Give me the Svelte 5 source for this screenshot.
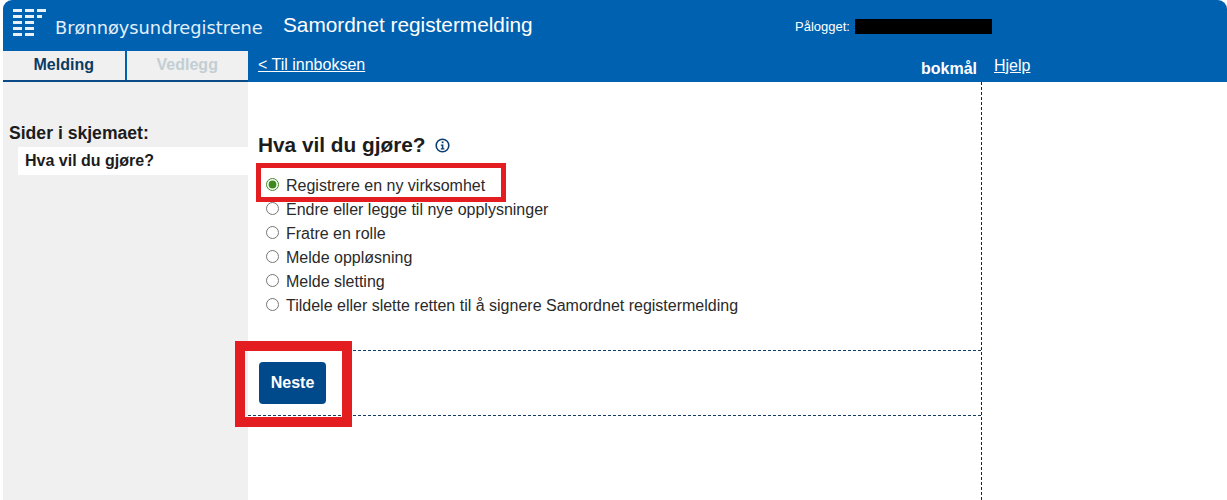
<script>
  const options = [
    'Registrere en ny virksomhet',
    'Endre eller legge til nye opplysninger',
    'Fratre en rolle',
    'Melde oppløsning',
    'Melde sletting',
    'Tildele eller slette retten til å signere Samordnet registermelding'
  ];
  let choice = $state(options[0]);
</script>

<div class="page">
  <header class="header">
    <div class="top">
      <svg class="logo" width="33" height="27" viewBox="0 0 33 27" aria-hidden="true">
        <g fill="#e8f1fa">
          <rect x="0" y="0" width="9" height="3" /><rect x="12" y="0" width="9" height="3" /><rect x="24" y="0" width="9" height="3" />
          <rect x="0" y="6" width="9" height="3" /><rect x="12" y="6" width="9" height="3" /><rect x="24" y="6" width="5" height="3" />
          <rect x="0" y="12" width="9" height="3" /><rect x="12" y="12" width="9" height="3" />
          <rect x="0" y="18" width="9" height="3" /><rect x="12" y="18" width="9" height="3" />
          <rect x="0" y="24" width="9" height="3" /><rect x="12" y="24" width="9" height="3" />
        </g>
      </svg>
      <span class="brand">Brønnøysundregistrene</span>
      <span class="title">Samordnet registermelding</span>
      <span class="login">Pålogget:</span>
      <span class="redacted"></span>
    </div>
    <div class="nav">
      <div class="tabs">
        <button class="tab active">Melding</button>
        <button class="tab disabled">Vedlegg</button>
      </div>
      <a class="back" href="#inbox">&lt; Til innboksen</a>
      <span class="lang">bokmål</span>
      <a class="help" href="#help">Hjelp</a>
    </div>
  </header>

  <div class="body">
    <aside class="side">
      <div class="side-title">Sider i skjemaet:</div>
      <div class="side-item">Hva vil du gjøre?</div>
    </aside>
    <main class="main">
      <h1>Hva vil du gjøre?
        <svg class="info" width="15" height="15" viewBox="0 0 15 15" aria-hidden="true">
          <circle cx="7.5" cy="7.5" r="6.3" fill="none" stroke="#0b3f70" stroke-width="1.6" />
          <rect x="6.7" y="3.4" width="1.8" height="1.8" fill="#0b3f70" />
          <path d="M5.8 6.5h2.6v3.7h1v1.2H5.8v-1.2h1V7.7h-1z" fill="#0b3f70" />
        </svg>
      </h1>
      <div class="options">
        <div class="mark mark-option"></div>
        {#each options as o}
          <label class="option">
            <input type="radio" name="what" value={o} bind:group={choice} />
            <span>{o}</span>
          </label>
        {/each}
      </div>
      <div class="actions">
        <div class="mark mark-button"></div>
        <button class="next">Neste</button>
      </div>
    </main>
    <div class="right"></div>
  </div>
</div>

<style>
  :global(body) { margin: 0; background: #fff; }
  .page {
    height: 500px;
    overflow: hidden;
    display: flex;
    flex-direction: column;
    font-family: "Liberation Sans", Arial, sans-serif;
    color: #222;
  }
  .header {
    margin-left: 3px;
    height: 82px;
    flex: none;
    background: #0061b1;
    border-radius: 9px 9px 0 0;
    color: #fff;
  }
  .top {
    height: 51px;
    display: flex;
    align-items: flex-start;
  }
  .logo { margin: 9px 0 0 10px; flex: none; }
  .brand {
    margin: 17px 0 0 9px;
    width: 228px;
    font-family: "DejaVu Sans", sans-serif;
    font-size: 17.8px;
    line-height: 22px;
    color: #e3effa;
    white-space: nowrap;
  }
  .title {
    margin-top: 13px;
    width: 512px;
    font-size: 20.8px;
    line-height: 24px;
    white-space: nowrap;
  }
  .login {
    margin-top: 19px;
    width: 60px;
    font-size: 13px;
    line-height: 15px;
    white-space: nowrap;
  }
  .redacted {
    margin-top: 19px;
    width: 137px;
    height: 15px;
    background: #000;
  }
  .nav {
    height: 31px;
    display: flex;
    align-items: flex-start;
  }
  .tabs {
    width: 245px;
    height: 31px;
    flex: none;
    display: flex;
    gap: 2px;
    box-sizing: border-box;
    border-bottom: 2px solid #0a4a86;
  }
  .tab {
    flex: 1;
    border: 0;
    padding: 0 0 2px;
    background: #f0f0f0;
    font: bold 16px "Liberation Sans", Arial, sans-serif;
  }
  .tab.active { color: #0b3a62; }
  .tab.disabled { color: #c3ced3; }
  .back {
    margin: 5px 0 0 10px;
    width: 663px;
    font-size: 16px;
    line-height: 18px;
    color: #fff;
  }
  .lang {
    margin-top: 9px;
    width: 73px;
    font-size: 16px;
    font-weight: bold;
    line-height: 18px;
  }
  .help {
    margin-top: 6px;
    font-size: 16px;
    line-height: 18px;
    color: #fff;
  }
  .body {
    flex: 1;
    display: flex;
  }
  .side {
    margin-left: 3px;
    width: 245px;
    flex: none;
    box-sizing: border-box;
    padding-top: 41px;
    background: #f0f0f0;
  }
  .side-title {
    margin-left: 6px;
    font-size: 17.6px;
    font-weight: bold;
    line-height: 20px;
    color: #1c1c1c;
  }
  .side-item {
    margin: 4px 0 0 15px;
    height: 28px;
    padding-left: 7px;
    background: #fff;
    font-size: 16px;
    font-weight: bold;
    line-height: 27px;
    color: #1c1c1c;
  }
  .main {
    width: 734px;
    flex: none;
    box-sizing: border-box;
    border-right: 1px dashed #222;
    padding-top: 50px;
  }
  h1 {
    margin: 0 0 0 10px;
    display: flex;
    align-items: center;
    gap: 9px;
    height: 25px;
    font-size: 20.8px;
    font-weight: bold;
    line-height: 25px;
    color: #1c1c1c;
  }
  .info { margin-top: 2px; }
  .options {
    position: relative;
    margin-top: 16px;
    padding-left: 18px;
  }
  .option {
    display: flex;
    align-items: center;
    height: 24px;
    font-size: 16px;
    color: #2a2a2a;
  }
  .option span { padding-top: 1px; }
  .option input {
    margin: 0 7px 2px 0;
    width: 13px;
    height: 13px;
    accent-color: #3f8a1e;
  }
  .mark {
    position: absolute;
    box-sizing: border-box;
    border: solid #e41e20;
    pointer-events: none;
  }
  .mark-option {
    left: 8px;
    top: -10px;
    width: 250px;
    height: 39px;
    border-width: 5px;
  }
  .actions {
    position: relative;
    margin-top: 33px;
    height: 66px;
    box-sizing: border-box;
    border-top: 1px dashed #123c66;
    border-bottom: 1px dashed #123c66;
    padding: 11px 0 0 11px;
  }
  .mark-button {
    left: -13px;
    top: -10px;
    width: 117px;
    height: 86px;
    border-width: 10px;
  }
  .next {
    display: block;
    width: 67px;
    height: 42px;
    border: 0;
    border-radius: 4px;
    background: #004a8c;
    color: #fff;
    font: bold 16px "Liberation Sans", Arial, sans-serif;
    padding: 0;
  }
  .right { flex: 1; }
</style>
